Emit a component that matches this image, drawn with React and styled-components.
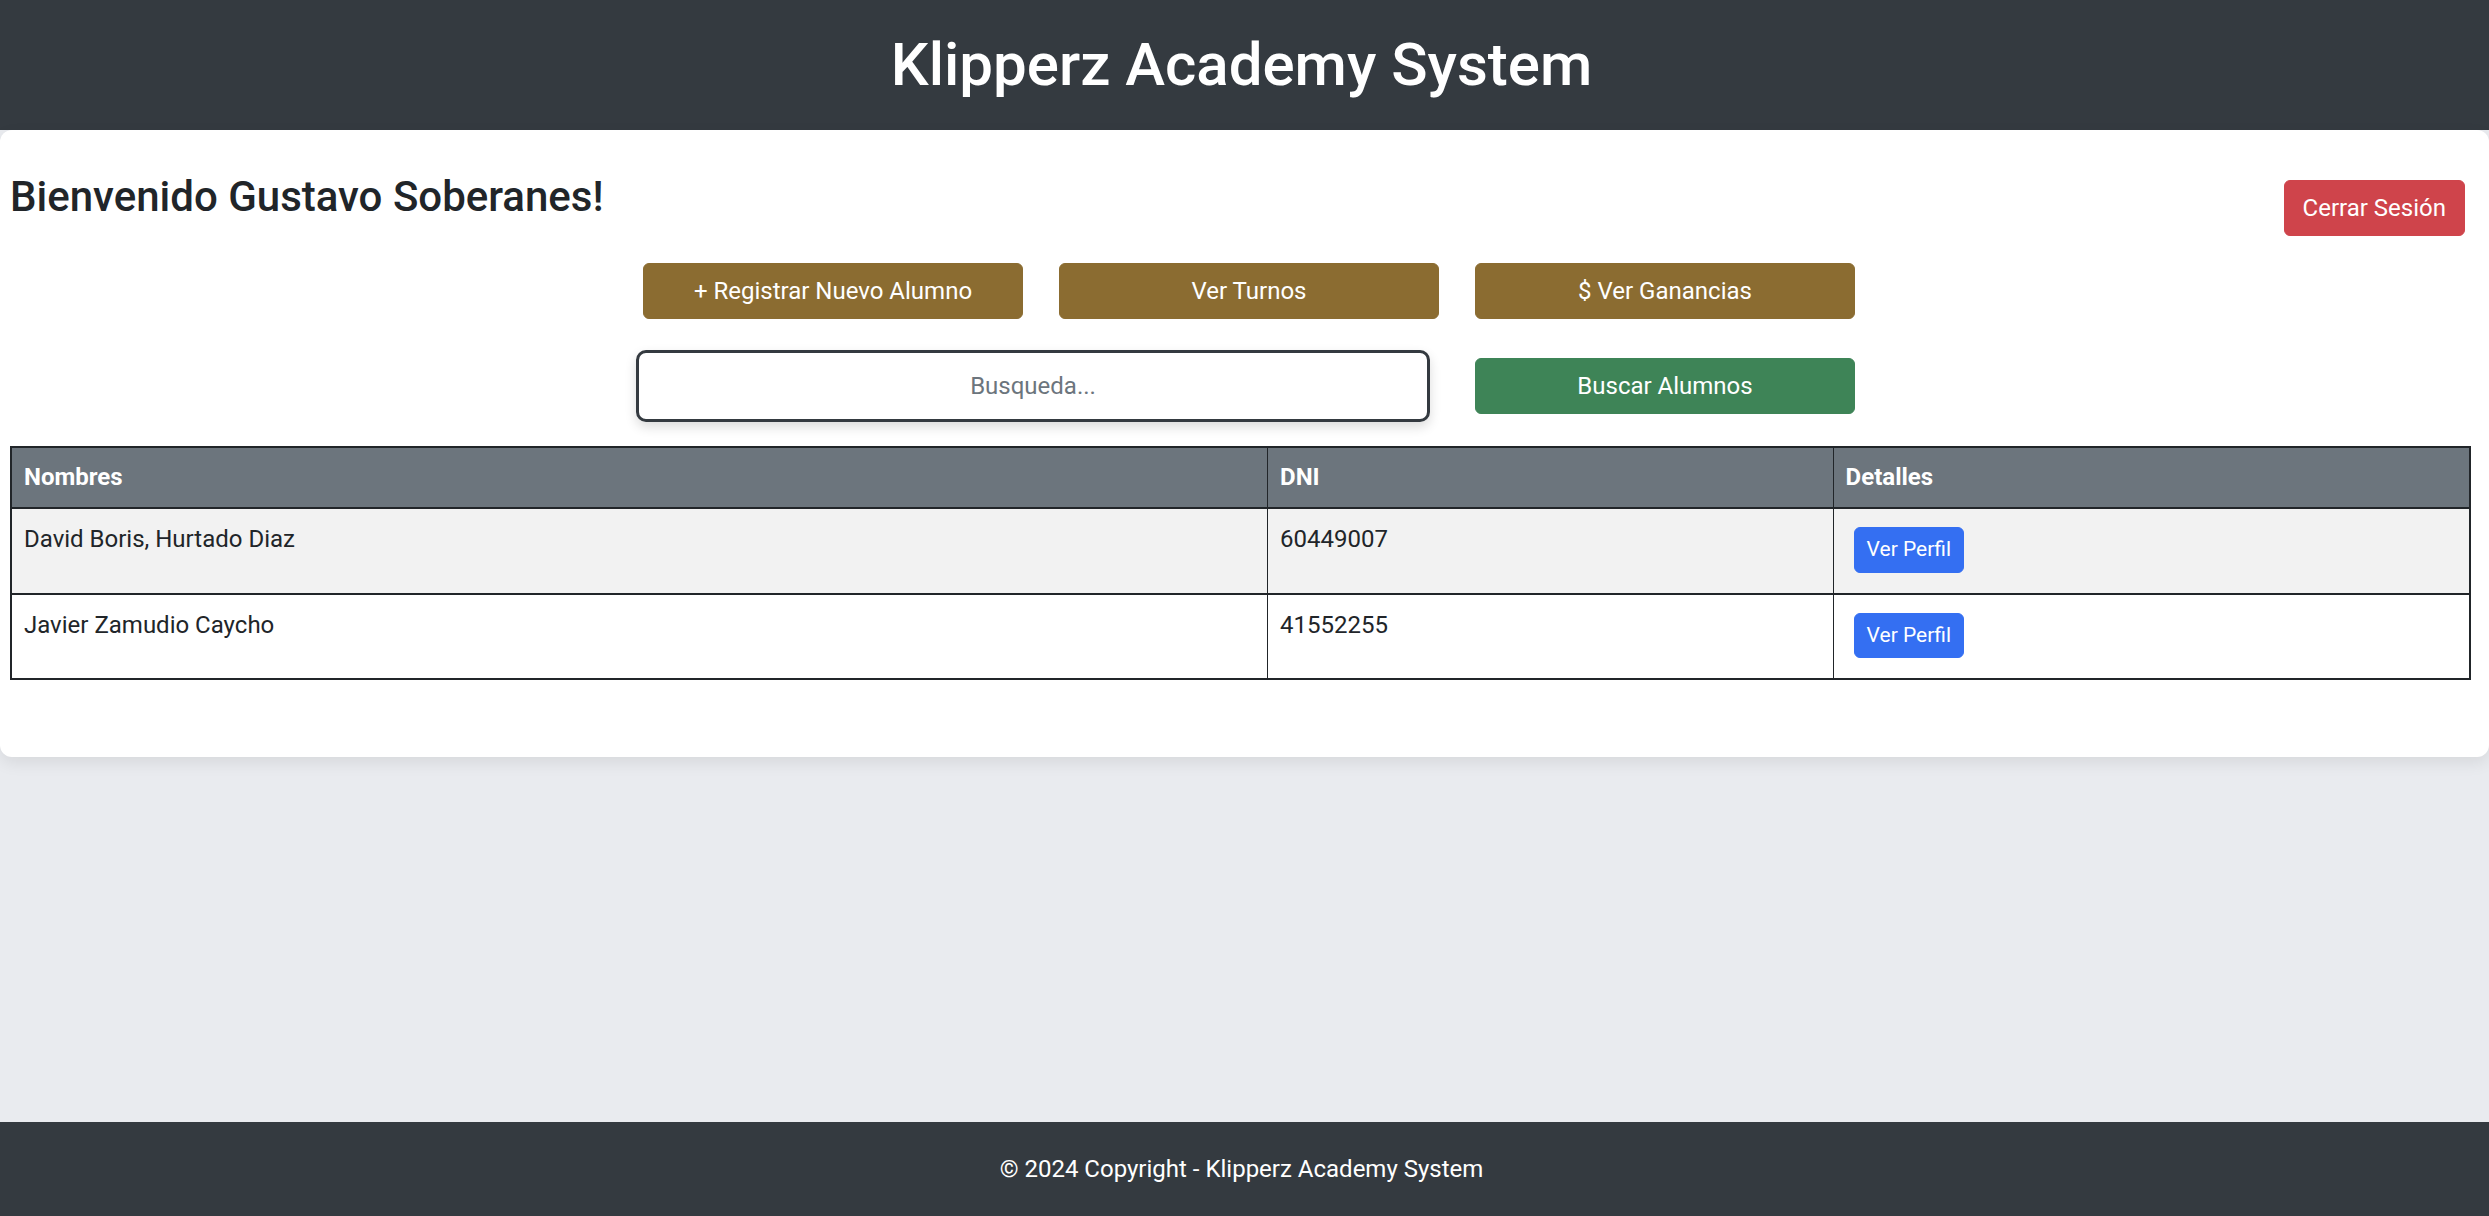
import React from "react";
import styled, { createGlobalStyle } from "styled-components";

const GlobalStyle = createGlobalStyle`
  html, body {
    margin: 0;
    padding: 0;
  }
  body {
    font-family: Roboto, "Liberation Sans", Arial, sans-serif;
    font-size: 24px;
    line-height: 1.5;
    color: #212529;
    background: #e9ebef;
  }
  * {
    box-sizing: border-box;
  }
`;

const students = [
  { name: "David Boris, Hurtado Diaz", dni: "60449007" },
  { name: "Javier Zamudio Caycho", dni: "41552255" },
];

const App = () => {
  return (
    <>
      <GlobalStyle />
      <Page>
        <TopBar>
          <Title>Klipperz Academy System</Title>
        </TopBar>

        <Main>
          <Card>
            <Welcome>
              <Greeting>Bienvenido Gustavo Soberanes!</Greeting>
              <Button color="#cf444b">Cerrar Sesión</Button>
            </Welcome>

            <Actions>
              <Button color="#8b6c31">+ Registrar Nuevo Alumno</Button>
              <Button color="#8b6c31">Ver Turnos</Button>
              <Button color="#8b6c31">$ Ver Ganancias</Button>
              <SearchInput placeholder="Busqueda..." />
              <Button color="#3e8457">Buscar Alumnos</Button>
            </Actions>

            <Table>
              <thead>
                <tr>
                  <Th width="51.1%">Nombres</Th>
                  <Th width="23%">DNI</Th>
                  <Th>Detalles</Th>
                </tr>
              </thead>
              <tbody>
                {students.map((s, i) => (
                  <Row key={s.dni} striped={i % 2 === 0}>
                    <Td>{s.name}</Td>
                    <Td>{s.dni}</Td>
                    <Td>
                      <SmallButton>Ver Perfil</SmallButton>
                    </Td>
                  </Row>
                ))}
              </tbody>
            </Table>
          </Card>
        </Main>

        <Footer>© 2024 Copyright - Klipperz Academy System</Footer>
      </Page>
    </>
  );
};

const Page = styled.div`
  min-height: 100vh;
  display: flex;
  flex-direction: column;
`;

const TopBar = styled.header`
  background: #343a40;
  color: #fff;
  padding: 29px 6px 29px 0;
  text-align: center;
`;

const Title = styled.h1`
  margin: 0;
  font-size: 60px;
  font-weight: 500;
  line-height: 1.2;
`;

const Main = styled.main`
  flex: 1;
`;

const Card = styled.section`
  background: #fff;
  border-radius: 12px;
  box-shadow: 0 6px 16px rgba(0, 0, 0, 0.08);
  padding: 42px 18px 77px 10px;
`;

const Welcome = styled.div`
  display: flex;
  justify-content: space-between;
  align-items: flex-start;

  button {
    margin-top: 8px;
    margin-right: 6px;
  }
`;

const Greeting = styled.h3`
  margin: 0;
  font-size: 42px;
  font-weight: 500;
  line-height: 1.2;
  color: #212529;
`;

const Actions = styled.div`
  display: grid;
  grid-template-columns: repeat(3, 380px);
  column-gap: 36px;
  row-gap: 31px;
  justify-content: center;
  align-items: center;
  margin-top: 27px;
  padding-left: 17px;
`;

const Button = styled.button`
  font-family: inherit;
  font-size: 24px;
  line-height: 1.5;
  font-weight: 400;
  color: #fff;
  background: ${(p) => p.color};
  border: 1px solid ${(p) => p.color};
  border-radius: 6px;
  padding: 9px 18px;
  cursor: pointer;
`;

const SearchInput = styled.input`
  grid-column: span 2;
  font-family: inherit;
  font-size: 24px;
  line-height: 1.5;
  height: 72px;
  margin-left: -7px;
  width: calc(100% - 2px);
  padding: 15px 18px;
  text-align: center;
  border: 3px solid #343a40;
  border-radius: 10px;
  box-shadow: 0 5px 12px rgba(0, 0, 0, 0.14);
  color: #212529;
  outline: none;

  &::placeholder {
    color: #6c757d;
  }
`;

const Table = styled.table`
  width: 100%;
  margin-top: 24px;
  border-collapse: collapse;
  border: 2px solid #212529;
`;

const Th = styled.th`
  width: ${(p) => p.width || "auto"};
  background: #6c757d;
  color: #fff;
  font-weight: 700;
  text-align: left;
  padding: 11px 12px 12px;
  border-left: 1px solid #212529;
  border-bottom: 2px solid #212529;
`;

const Row = styled.tr`
  background: ${(p) => (p.striped ? "#f2f2f2" : "#fff")};
  border-bottom: 2px solid #212529;
`;

const Td = styled.td`
  vertical-align: top;
  padding: 12px 12px 13px;
  border-left: 1px solid #212529;
  color: #212529;
`;

const SmallButton = styled.button`
  font-family: inherit;
  font-size: 21px;
  line-height: 1.5;
  color: #fff;
  background: #346ff2;
  border: 1px solid #346ff2;
  border-radius: 6px;
  padding: 6px 12px;
  margin: 6px 8px 7px;
  cursor: pointer;
`;

const Footer = styled.footer`
  background: #343a40;
  color: #fff;
  text-align: center;
  padding: 29px 6px 29px 0;
  font-size: 24px;
  line-height: 1.5;
`;

export default App;
